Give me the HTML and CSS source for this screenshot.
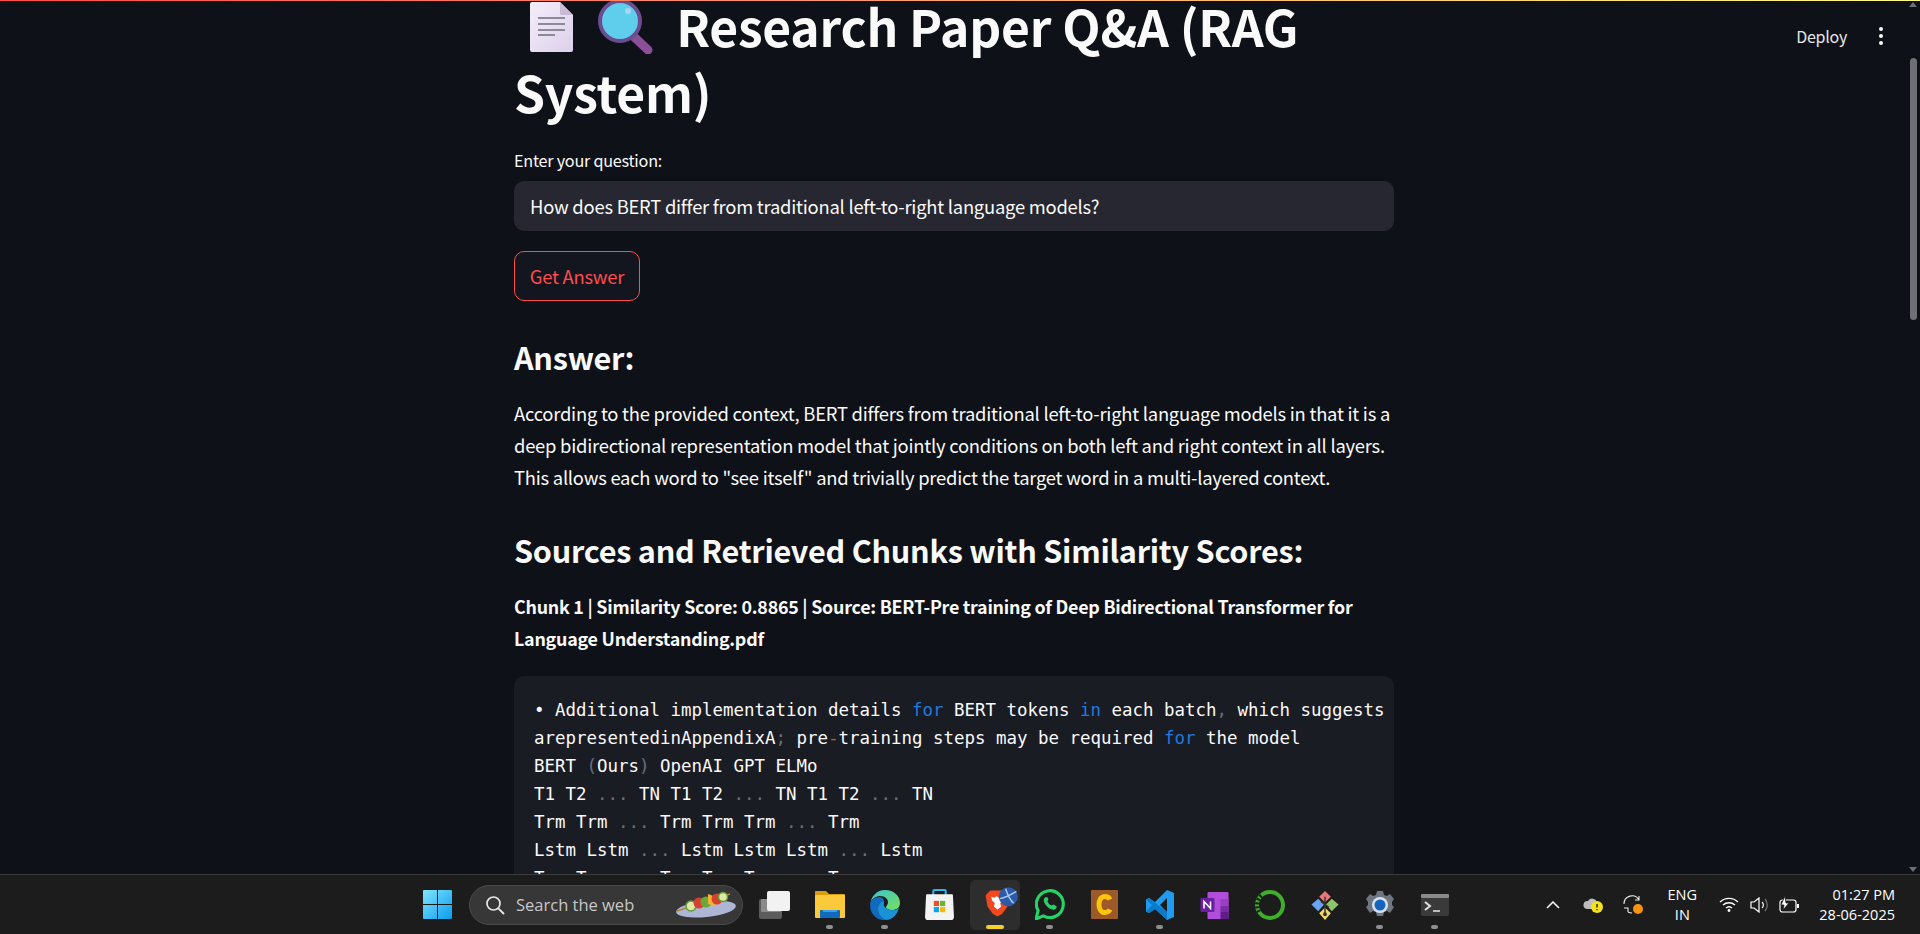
FILE: index.html
```html
<!DOCTYPE html>
<html lang="en">
<head>
    <meta charset="UTF-8">
    <meta name="viewport" content="width=device-width, initial-scale=1.0">
    <title>Research Paper Q&amp;A</title>
    <link rel="stylesheet" href="styles.css">
</head>
<body>
    <div class="app">
        <div class="top-line"></div>
        <div class="toolbar">
            <span class="deploy">Deploy</span>
            <span class="kebab"><i></i><i></i><i></i></span>
        </div>
        <div class="scrollbar">
            <span class="arrow-up"></span>
            <span class="thumb"></span>
            <span class="arrow-down"></span>
        </div>

        <main class="content">
            <h1>
                <svg class="emoji" viewBox="0 0 70 55" width="70" height="55">
                    <defs>
                        <linearGradient id="paper" x1="0" y1="0" x2="1" y2="1">
                            <stop offset="0" stop-color="#f4eef8"/>
                            <stop offset="1" stop-color="#ddd0ec"/>
                        </linearGradient>
                    </defs>
                    <path d="M18 3h28l13 13v35a2 2 0 0 1-2 2H18a2 2 0 0 1-2-2V5a2 2 0 0 1 2-2z" fill="url(#paper)"/>
                    <path d="M46 3l13 13H48a2 2 0 0 1-2-2z" fill="#c9bcd6"/>
                    <path d="M24 19h27M24 25h27M24 31h27M24 36h17" stroke="#8d8a99" stroke-width="2" fill="none"/>
                </svg>
                <svg class="emoji" viewBox="0 0 70 55" width="70" height="55">
                    <path d="M36 35l17 16" stroke="#8a4f98" stroke-width="9" stroke-linecap="round"/>
                    <circle cx="25" cy="22" r="20" fill="#5fcdec" stroke="#6a4d8f" stroke-width="4"/>
                    <circle cx="33" cy="12" r="3" fill="#a8d8ee"/>
                </svg>
                Research Paper Q&amp;A (RAG System)
            </h1>

            <label class="field-label" for="question">Enter your question:</label>
            <input class="question" id="question" type="text" value="How does BERT differ from traditional left-to-right language models?">
            <button class="answer-btn">Get Answer</button>

            <h3 class="answer-head">Answer:</h3>
            <p class="answer-text">According to the provided context, BERT differs from traditional left-to-right language models in that it is a deep bidirectional representation model that jointly conditions on both left and right context in all layers. This allows each word to "see itself" and trivially predict the target word in a multi-layered context.</p>

            <h3 class="sources-head">Sources and Retrieved Chunks with Similarity Scores:</h3>
            <p class="chunk-title">Chunk 1 | Similarity Score: 0.8865 | Source: BERT-Pre training of Deep Bidirectional Transformer for Language Understanding.pdf</p>

            <pre class="code">• Additional implementation details <span class="kw">for</span> BERT tokens <span class="kw">in</span> each batch<span class="pn">,</span> which suggests
arepresentedinAppendixA<span class="pn">;</span> pre<span class="op">-</span>training steps may be required <span class="kw">for</span> the model
BERT <span class="pn">(</span>Ours<span class="pn">)</span> OpenAI GPT ELMo
T1 T2 <span class="pn">...</span> TN T1 T2 <span class="pn">...</span> TN T1 T2 <span class="pn">...</span> TN
Trm Trm <span class="pn">...</span> Trm Trm Trm <span class="pn">...</span> Trm
Lstm Lstm <span class="pn">...</span> Lstm Lstm Lstm <span class="pn">...</span> Lstm
Trm Trm <span class="pn">...</span> Trm Trm Trm <span class="pn">...</span> Trm</pre>
        </main>
    </div>

    <footer class="taskbar">
        <div class="task-start">
            <svg viewBox="0 0 29 29" width="29" height="29">
                <defs>
                    <linearGradient id="win" x1="0" y1="0" x2="1" y2="1">
                        <stop offset="0" stop-color="#7fe6fb"/>
                        <stop offset="1" stop-color="#0b9cf0"/>
                    </linearGradient>
                </defs>
                <path d="M1 0h13v14H0V1a1 1 0 0 1 1-1zM15 0h13a1 1 0 0 1 1 1v13H15zM0 15h14v14H1a1 1 0 0 1-1-1zM15 15h14v13a1 1 0 0 1-1 1H15z" fill="url(#win)"/>
            </svg>
        </div>

        <div class="search">
            <svg viewBox="0 0 20 20" width="20" height="20">
                <circle cx="8.5" cy="8.5" r="6.5" fill="none" stroke="#e6e6e6" stroke-width="1.7"/>
                <path d="M13.3 13.3l5.2 5.2" stroke="#e6e6e6" stroke-width="1.9" stroke-linecap="round"/>
            </svg>
            <span class="search-text">Search the web</span>
            <svg class="kebab-dish" viewBox="0 0 62 28" width="62" height="28">
                <ellipse cx="31" cy="18" rx="30" ry="8" fill="#aeb6d6" transform="rotate(-6 31 18)"/>
                <path d="M2 20L55 3" stroke="#b9803a" stroke-width="1.4"/>
                <circle cx="16" cy="15" r="5" fill="#dfe8a8" stroke="#5f9e35" stroke-width="1.5"/>
                <circle cx="24" cy="12" r="5.5" fill="#d5402f"/>
                <circle cx="31" cy="11" r="5.5" fill="#68a83c"/>
                <path d="M33 3l8 3-1 9-7-2z" fill="#f4b52c"/>
                <circle cx="42" cy="8" r="5.5" fill="#d5402f"/>
                <circle cx="48" cy="6" r="4.5" fill="#dfe8a8" stroke="#5f9e35" stroke-width="1.5"/>
            </svg>
        </div>

        <div class="task-icons">
            <div class="task-icon">
                <svg viewBox="0 0 31 28" width="31" height="28">
                    <rect x="0" y="8" width="23" height="20" rx="2" fill="#5c5c5c"/>
                    <rect x="2" y="8" width="20" height="13" rx="1" fill="#8b8b8b"/>
                    <rect x="8" y="0" width="23" height="20" rx="2" fill="#f2f2f2"/>
                </svg>
            </div>
            <div class="task-icon open">
                <svg viewBox="0 0 30 27" width="30" height="27">
                    <path d="M1 0h10l3 3h15a1 1 0 0 1 1 1v4H0V1a1 1 0 0 1 1-1z" fill="#d99e10"/>
                    <rect x="0" y="4" width="30" height="23" rx="1" fill="#fcc93a"/>
                    <rect x="5" y="19" width="20" height="8" rx="1" fill="#0f6cbd"/>
                    <rect x="8" y="19" width="14" height="2" fill="#3aa0e8"/>
                </svg>
            </div>
            <div class="task-icon open">
                <svg viewBox="0 0 30 30" width="30" height="30">
                    <defs>
                        <linearGradient id="edge" x1="0" y1="0" x2="1" y2="1">
                            <stop offset="0" stop-color="#36c3d6"/>
                            <stop offset="1" stop-color="#7ae05a"/>
                        </linearGradient>
                    </defs>
                    <path d="M15 0c9 0 15 6 15 13 0 5-4 7-8 7-3 0-6-1-6-3 0-1 2-2 2-5 0-3-3-6-8-6C5 6 0 10 0 15 1 6 7 0 15 0z" fill="url(#edge)"/>
                    <path d="M0 15c0-5 5-8 9-8 3 0 5 2 5 4-4 1-6 4-6 8 0 5 3 9 8 11C7 31 0 24 0 15z" fill="#0f6ac0"/>
                    <path d="M8 19c0-4 2-7 6-8 0 3-1 5 2 7 3 3 9 3 13 0-2 7-7 12-13 12-5-2-8-6-8-11z" fill="#1993d8"/>
                </svg>
            </div>
            <div class="task-icon">
                <svg viewBox="0 0 28 30" width="29" height="31">
                    <path d="M8 6V2a1 1 0 0 1 1-1h10a1 1 0 0 1 1 1v4" fill="none" stroke="#2db3ef" stroke-width="2"/>
                    <path d="M2 5h24a1 1 0 0 1 1 1l1 21a3 3 0 0 1-3 3H3a3 3 0 0 1-3-3L1 6a1 1 0 0 1 1-1z" fill="#f3f3f3"/>
                    <rect x="8.5" y="11.5" width="5" height="5" fill="#e8502f"/>
                    <rect x="14.5" y="11.5" width="5" height="5" fill="#6fb52c"/>
                    <rect x="8.5" y="17.5" width="5" height="5" fill="#0ea4e8"/>
                    <rect x="14.5" y="17.5" width="5" height="5" fill="#fdb900"/>
                </svg>
            </div>
            <div class="task-icon active">
                <svg class="brave" viewBox="0 0 40 38" width="40" height="38">
                    <path d="M2 9l5-5h14l5 5 2 2-2 11-6 8-5 3-5-3-6-8-2-11z" fill="#f2481f"/>
                    <path d="M8 11l4 1 2-2 2 2 4-1 1 4-3 3 1 4-4 3-4-3 1-4-3-3z" fill="#fff"/>
                    <circle cx="27" cy="11" r="10.5" fill="#2c5aa8"/>
                    <path d="M18 13c6-1 13-5 18-8M24 2c2 6 5 13 9 16" stroke="#a8cdf0" stroke-width="1.6" fill="none"/>
                </svg>
            </div>
            <div class="task-icon open">
                <svg viewBox="0 0 29 30" width="30" height="31">
                    <path d="M1 29l2-8a13 13 0 1 1 5 5z" fill="none" stroke="#26d366" stroke-width="3" stroke-linejoin="round"/>
                    <path d="M10 8c-2 1-2 4 0 7 2 3 5 5 8 5 2 0 3-2 3-3l-3-2-2 1c-2-1-3-2-4-4l1-2-1-2z" fill="#26d366"/>
                </svg>
            </div>
            <div class="task-icon">
                <svg viewBox="0 0 27 29" width="29" height="29">
                    <rect width="27" height="29" rx="1" fill="#9c5a28"/>
                    <path d="M19 9.5c-1-2-3-3-5-3-4 0-6 4-6 8s2 8 6 8c2 0 4-1 5-3" fill="none" stroke="#fcc40d" stroke-width="5"/>
                </svg>
            </div>
            <div class="task-icon open">
                <svg viewBox="0 0 28 30" width="30" height="30">
                    <path d="M21 0l7 3v24l-7 3-12-11-6 4-3-1.500V9.500L3 8l6 4z" fill="#1f9cf0"/>
                    <path d="M21 8l-7 7 7 7z" fill="#1c1c1c"/>
                    <path d="M0 9.500L3 8l18 14v8L9 19l-6 4-3-1.500 6-6.500z" fill="#0a7ccc"/>
                </svg>
            </div>
            <div class="task-icon">
                <svg viewBox="0 0 28 28" width="29" height="28">
                    <rect x="7" y="1" width="21" height="27" rx="1" fill="#b14ddb"/>
                    <rect x="20" y="8" width="8" height="7" fill="#9a3fc4"/>
                    <rect x="20" y="15" width="8" height="6" fill="#7c2aa8"/>
                    <rect x="20" y="21" width="8" height="7" fill="#5f1d8a"/>
                    <rect x="0" y="7" width="14" height="14" rx="1" fill="#6a1f9f"/>
                    <path d="M3.500 17.500V10.500L10 17.500V10.500" fill="none" stroke="#fff" stroke-width="1.600"/>
                </svg>
            </div>
            <div class="task-icon">
                <svg viewBox="0 0 30 30" width="30" height="30">
                    <circle cx="15" cy="15" r="13" fill="none" stroke="#3fae2a" stroke-width="4"/>
                    <path d="M4 22a13 13 0 0 1 3-17" fill="none" stroke="#1c1c1c" stroke-width="4" stroke-dasharray="2 2"/>
                </svg>
            </div>
            <div class="task-icon">
                <svg viewBox="0 0 28 31" width="30" height="30">
                    <path d="M14 1l6 6-6 6-6-6z" fill="#e87878"/>
                    <path d="M7 9l6 6-6 7-7-7z" fill="#6aa4f0"/>
                    <path d="M21 9l7 6-7 7-6-7z" fill="#8cc56a"/>
                    <path d="M14 18l6 6-6 7-6-7z" fill="#f5d76a"/>
                    <path d="M14 7v17M10 12l8 6" stroke="#333" stroke-width="1.500"/>
                    <circle cx="14" cy="25" r="2" fill="#333"/>
                </svg>
            </div>
            <div class="task-icon open">
                <svg viewBox="0 0 28 28" width="30" height="28">
                    <path d="M11 0h6l1 4 3 1 3-2 4 5-2 3v3l2 2-4 6-3-2-3 1-1 4h-6l-1-4-3-1-3 2-4-6 2-2v-3L0 8l4-5 3 2 3-1z" fill="#6e7681"/>
                    <circle cx="14" cy="14" r="8" fill="#d9e2ec"/>
                    <circle cx="14" cy="14" r="5.500" fill="#1565c0"/>
                </svg>
            </div>
            <div class="task-icon open">
                <svg viewBox="0 0 28 22" width="30" height="22">
                    <rect width="28" height="22" rx="2" fill="#3a3a3a"/>
                    <rect width="28" height="4" rx="1" fill="#8a8a8a"/>
                    <path d="M4 8l5 4-5 4" fill="none" stroke="#e0e0e0" stroke-width="2"/>
                    <path d="M12 17h7" stroke="#e0e0e0" stroke-width="1.600"/>
                </svg>
            </div>
        </div>

        <div class="tray">
            <svg class="tray-chevron" viewBox="0 0 14 8" width="14" height="8">
                <path d="M1 7l6-6 6 6" fill="none" stroke="#fff" stroke-width="1.500"/>
            </svg>
            <svg class="tray-cloud" viewBox="0 0 20 16" width="20" height="16">
                <path d="M4 12a4 4 0 0 1 1-8 5 5 0 0 1 9 1 4 4 0 0 1 0 7z" fill="#bdbdbd"/>
                <circle cx="14" cy="10" r="6" fill="#f5e21a"/>
                <path d="M14 7v3.500M14 12v1.200" stroke="#222" stroke-width="1.400"/>
            </svg>
            <svg class="tray-sync" viewBox="0 0 20 20" width="20" height="20">
                <path d="M1 9a8 8 0 0 1 15-4M16 1v4h-4M1 13h4v4M5 17a8 8 0 0 0 4 1" fill="none" stroke="#eee" stroke-width="1.100"/>
                <circle cx="15" cy="14" r="5" fill="#f7930e"/>
            </svg>
            <div class="tray-lang"><span>ENG</span><span>IN</span></div>
            <svg class="tray-wifi" viewBox="0 0 20 15" width="20" height="15">
                <path d="M1 5a13 13 0 0 1 18 0M4 8a9 9 0 0 1 12 0M7 11a4.500 4.500 0 0 1 6 0" fill="none" stroke="#fff" stroke-width="1.400"/>
                <circle cx="10" cy="13.500" r="1.400" fill="#fff"/>
            </svg>
            <svg class="tray-volume" viewBox="0 0 20 16" width="20" height="16">
                <path d="M1 5h3l5-4v14l-5-4H1z" fill="none" stroke="#fff" stroke-width="1.200"/>
                <path d="M12 5a4 4 0 0 1 0 6" fill="none" stroke="#fff" stroke-width="1.200"/>
                <path d="M15 2a9 9 0 0 1 0 12" fill="none" stroke="#777" stroke-width="1.200"/>
            </svg>
            <svg class="tray-battery" viewBox="0 0 20 17" width="20" height="17">
                <rect x="1" y="4" width="16" height="12" rx="2.500" fill="none" stroke="#fff" stroke-width="1.200"/>
                <rect x="18" y="8" width="2" height="4" fill="#fff"/>
                <path d="M6 0L2 9h3l-1 5 6-7H7z" fill="#fff" stroke="#1c1c1c" stroke-width="0.800"/>
            </svg>
            <div class="tray-clock"><span>01:27 PM</span><span>28-06-2025</span></div>
        </div>
    </footer>
</body>
</html>
```

FILE: styles.css
```css
/* page */
html, body {
    margin: 0;
    height: 934px;
    overflow: hidden;
}
body {
    display: flex;
    flex-direction: column;
    background-color: #0e1117;
    color: #fafafa;
    font-family: "Noto Sans CJK SC", "Noto Sans", sans-serif;
    letter-spacing: -0.015em;
}
.app {
    position: relative;
    flex: 1;
    min-height: 0;
    overflow: hidden;
    padding-right: 12px;
}

/* top strip and toolbar */
.top-line {
    position: absolute;
    top: 0;
    left: 0;
    right: 0;
    height: 1px;
    background: linear-gradient(90deg, #ff4b4b, #fffd80);
    z-index: 3;
}
.toolbar {
    position: absolute;
    top: 18px;
    right: 37px;
    display: flex;
    align-items: center;
    gap: 32px;
    height: 36px;
}
.deploy {
    font-size: 16px;
    color: #e6e6e8;
}
.kebab {
    display: flex;
    flex-direction: column;
    gap: 3px;
}
.kebab i {
    display: block;
    width: 4px;
    height: 4px;
    border-radius: 50%;
    background: #fafafa;
}

/* scrollbar */
.scrollbar {
    position: absolute;
    top: 0;
    right: 0;
    bottom: 0;
    width: 20px;
}
.thumb {
    position: absolute;
    top: 58px;
    left: 10px;
    width: 7px;
    height: 262px;
    border-radius: 4px;
    background: #6f7073;
}
.arrow-up, .arrow-down {
    position: absolute;
    left: 9px;
    width: 0;
    height: 0;
    border-left: 4.5px solid transparent;
    border-right: 4.5px solid transparent;
}
.arrow-up {
    top: 2px;
    border-bottom: 5px solid #6f7073;
}
.arrow-down {
    bottom: 2px;
    border-top: 5px solid #6f7073;
}

/* main column */
.content {
    width: 880px;
    margin: -8px auto 0;
}
h1 {
    margin: 0 0 24px;
    font-size: 49.8px;
    line-height: 66px;
    font-weight: 700;
}
.emoji {
    vertical-align: -7px;
}
.field-label {
    display: block;
    font-size: 16.2px;
    line-height: 25px;
    margin-bottom: 8px;
}
.question {
    display: block;
    box-sizing: border-box;
    width: 100%;
    height: 50px;
    padding: 0 16px;
    border: none;
    border-radius: 10px;
    background: #262730;
    color: #fafafa;
    font-family: inherit;
    font-size: 18.4px;
    letter-spacing: inherit;
}
.answer-btn {
    display: block;
    box-sizing: border-box;
    margin-top: 20px;
    width: 126px;
    height: 50px;
    padding: 0;
    border: 1px solid #ff4b4b;
    border-radius: 10px;
    background: #13161f;
    color: #ff4b4b;
    font-family: inherit;
    font-size: 18.4px;
    letter-spacing: inherit;
}
h3 {
    margin: 0;
    font-size: 30.6px;
    line-height: 44px;
    font-weight: 600;
}
.answer-head {
    margin-top: 34px;
}
.answer-text {
    margin: 18px 0 0;
    font-size: 18.4px;
    line-height: 32px;
}
.sources-head {
    margin-top: 35px;
}
.chunk-title {
    margin: 18px 0 0;
    font-size: 17.87px;
    line-height: 32px;
    font-weight: 700;
}

/* code block */
.code {
    margin: 22px 0 0;
    padding: 20px;
    overflow: hidden;
    border-radius: 10px;
    background: #1a1c24;
    color: #fafafa;
    font-family: "DejaVu Sans Mono", monospace;
    font-size: 17.44px;
    letter-spacing: 0;
    line-height: 28px;
}
.kw {
    color: #1f7ae0;
}
.pn {
    color: #6b6f78;
}
.op {
    color: #c2562d;
}

/* windows taskbar */
.taskbar {
    display: flex;
    align-items: center;
    flex: none;
    box-sizing: border-box;
    height: 60px;
    padding-left: 423px;
    border-top: 1px solid #3c3c3c;
    background: #1c1c1c;
    font-family: "Open Sans", "Noto Sans", sans-serif;
    letter-spacing: 0;
}
.task-start {
    display: flex;
    width: 46px;
}
.search {
    display: flex;
    align-items: center;
    box-sizing: border-box;
    width: 274px;
    height: 40px;
    padding: 0 5px 0 15px;
    border: 1px solid #4a4a4a;
    border-radius: 20px;
    background: #373737;
}
.search-text {
    flex: 1;
    margin-left: 11px;
    font-size: 16.5px;
    color: #c8c8c8;
}
.task-icons {
    display: flex;
    margin-left: 4px;
}
.task-icon {
    position: relative;
    display: flex;
    align-items: center;
    justify-content: center;
    width: 55px;
    height: 50px;
}
.task-icon.open::after,
.task-icon.active::after {
    content: "";
    position: absolute;
    left: 24px;
    bottom: 1px;
    width: 7px;
    height: 4px;
    border-radius: 2px;
    background: #8f8f8f;
}
.task-icon.active {
    width: 50px;
    margin: 0 2.5px;
    border-radius: 5px;
    background: #2d2d2d;
}
.task-icon.active::after {
    left: 16px;
    width: 18px;
    background: #f5cf2c;
}
.brave {
    margin: -2px 0 0 14px;
}

/* system tray */
.tray {
    display: flex;
    align-items: center;
    margin-left: auto;
    padding-right: 25px;
    color: #fff;
    font-size: 14.5px;
}
.tray-chevron { margin-right: 23px; }
.tray-cloud { margin-right: 20px; }
.tray-sync { margin-right: 18px; }
.tray-lang {
    display: flex;
    flex-direction: column;
    align-items: center;
    width: 42px;
    line-height: 20px;
    margin-right: 16px;
}
.tray-wifi { margin-right: 11px; }
.tray-volume { margin-right: 9px; }
.tray-battery { margin-right: 20px; }
.tray-clock {
    display: flex;
    flex-direction: column;
    align-items: flex-end;
    line-height: 20px;
}
```
